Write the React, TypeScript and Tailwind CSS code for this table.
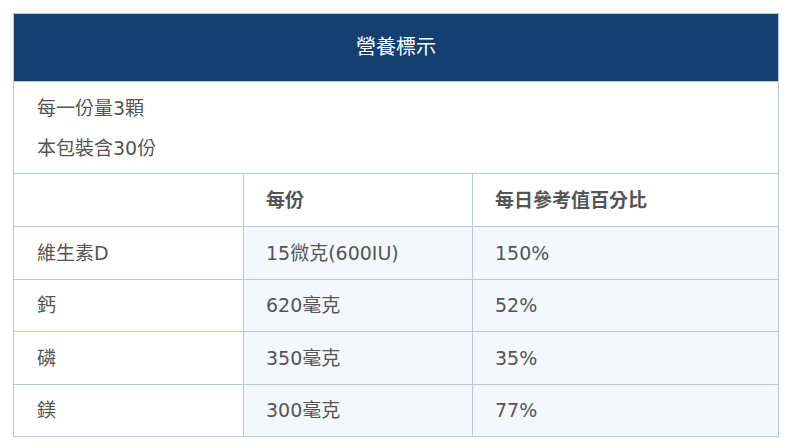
const rows = [
  { name: "維生素D", amount: "15微克(600IU)", pct: "150%" },
  { name: "鈣", amount: "620毫克", pct: "52%" },
  { name: "磷", amount: "350毫克", pct: "35%" },
  { name: "鎂", amount: "300毫克", pct: "77%" },
];

export default function App() {
  return (
    <div
      className="min-h-screen bg-white pl-[13px] pt-[13px] text-[#555555]"
      style={{ fontFamily: '"DejaVu Sans", "Noto Sans CJK TC", sans-serif' }}
    >
      <div className="w-[766px] border border-[#b9c9de]">
        <div className="flex h-[67px] items-center justify-center bg-[#133f71] pb-[2px] text-[20px] text-white">
          營養標示
        </div>
        <div className="flex h-[92px] flex-col justify-center gap-[14px] border-t border-[#b9c9de] pl-[23px] text-[19px]">
          <div className="leading-[26px]">每一份量3顆</div>
          <div className="leading-[26px]">本包裝含30份</div>
        </div>
        <div className="grid grid-cols-[229px_229px_1fr] border-t border-[#b9c9de] text-[19px]">
          <div className="h-[52px]" />
          <div className="flex h-[52px] items-center border-l border-[#b9c9de] pl-[22px] font-bold">每份</div>
          <div className="flex h-[52px] items-center border-l border-[#b9c9de] pl-[22px] font-bold">
            每日參考值百分比
          </div>
          {rows.map((r) => (
            <div key={r.name} className="contents">
              <div className="flex h-[52.5px] items-center border-t border-[#b9c9de] pl-[23px]">{r.name}</div>
              <div className="flex h-[52.5px] items-center border-l border-t border-[#b9c9de] bg-[#f4f8fd] pl-[22px]">
                {r.amount}
              </div>
              <div className="flex h-[52.5px] items-center border-l border-t border-[#b9c9de] bg-[#f4f8fd] pl-[22px]">
                {r.pct}
              </div>
            </div>
          ))}
        </div>
      </div>
    </div>
  );
}
